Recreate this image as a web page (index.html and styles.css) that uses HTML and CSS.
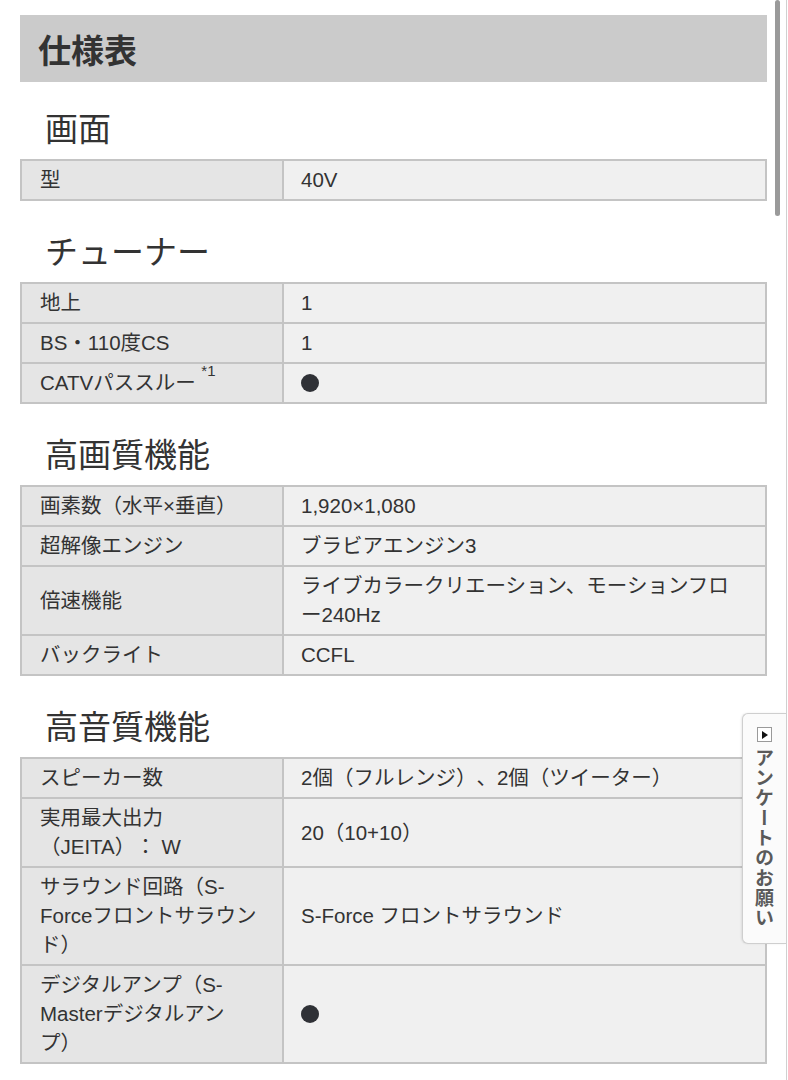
FILE: index.html
```html
<!DOCTYPE html>
<html lang="ja">
<head>
<meta charset="utf-8">
<title>仕様表</title>
<link rel="stylesheet" href="styles.css">
</head>
<body>
<main class="page">
  <h1 class="spec-header">仕様表</h1>

  <h2 class="section-title first">画面</h2>
  <table class="spec">
    <colgroup><col class="c1"><col></colgroup>
    <tr><th>型</th><td>40V</td></tr>
  </table>

  <h2 class="section-title">チューナー</h2>
  <table class="spec">
    <colgroup><col class="c1"><col></colgroup>
    <tr><th>地上</th><td>1</td></tr>
    <tr><th>BS・110度CS</th><td>1</td></tr>
    <tr><th>CATVパススルー <sup class="note">*1</sup></th><td><span class="dot"></span></td></tr>
  </table>

  <h2 class="section-title">高画質機能</h2>
  <table class="spec">
    <colgroup><col class="c1"><col></colgroup>
    <tr><th>画素数（水平×垂直）</th><td>1,920×1,080</td></tr>
    <tr><th>超解像エンジン</th><td>ブラビアエンジン3</td></tr>
    <tr><th>倍速機能</th><td>ライブカラークリエーション、モーションフロー240Hz</td></tr>
    <tr><th>バックライト</th><td>CCFL</td></tr>
  </table>

  <h2 class="section-title">高音質機能</h2>
  <table class="spec">
    <colgroup><col class="c1"><col></colgroup>
    <tr><th>スピーカー数</th><td>2個（フルレンジ）、2個（ツイーター）</td></tr>
    <tr><th>実用最大出力（JEITA）： W</th><td>20（10+10）</td></tr>
    <tr><th>サラウンド回路（S-Forceフロントサラウンド）</th><td>S-Force フロントサラウンド</td></tr>
    <tr><th>デジタルアンプ（S-Masterデジタルアンプ）</th><td><span class="dot"></span></td></tr>
  </table>
</main>

<div class="scroll-thumb"></div>
<div class="edge-line"></div>

<a class="survey-tab" href="#">
  <span class="survey-icon"><span class="tri"></span></span>
  <span class="survey-text">アンケートのお願い</span>
</a>
</body>
</html>
```

FILE: styles.css
```css
html, body {
  margin: 0;
  padding: 0;
  background: #ffffff;
}

body {
  font-family: "Liberation Sans", "Noto Sans CJK JP", sans-serif;
  color: #333333;
  position: relative;
  min-height: 1080px;
  text-spacing-trim: space-all;
}

.page {
  width: 747px;
  margin: 0 0 0 20px;
  padding-top: 15px;
}

.spec-header {
  margin: 0;
  height: 67px;
  background: #cbcbcb;
  display: flex;
  align-items: center;
  padding-left: 18px;
  font-size: 33px;
  font-weight: bold;
  color: #333;
}

.section-title {
  margin: 28px 0 5px;
  padding-left: 25px;
  font-size: 33px;
  line-height: 48px;
  font-weight: normal;
  color: #333;
}

.section-title.first {
  margin-top: 24px;
  margin-bottom: 5px;
}

.spec {
  width: 747px;
  border-collapse: collapse;
  table-layout: fixed;
  font-size: 20.5px;
  line-height: 29px;
}

.spec col.c1 {
  width: 262px;
}

.spec th,
.spec td {
  border: 2px solid #c4c4c4;
  padding: 4px 10px 5px 17px;
  text-align: left;
  vertical-align: middle;
  font-weight: normal;
  color: #333;
}

.spec th {
  background: #e5e5e5;
  padding-left: 18px;
  padding-right: 22px;
}

.spec td {
  background: #f0f0f0;
  padding-right: 20px;
}

.note {
  font-size: 15px;
  vertical-align: top;
  position: relative;
  top: -5px;
  line-height: 1;
}

.dot {
  display: inline-block;
  width: 18px;
  height: 18px;
  border-radius: 50%;
  background: #2f3136;
  vertical-align: -2px;
}

.scroll-thumb {
  position: absolute;
  left: 775px;
  top: 0;
  width: 5px;
  height: 216px;
  border-radius: 3px;
  background: #9a9a9a;
}

.edge-line {
  position: absolute;
  left: 786px;
  top: 0;
  width: 1px;
  height: 1080px;
  background: #d0d0d0;
}

.survey-tab {
  position: absolute;
  left: 742px;
  top: 713px;
  width: 44px;
  height: 231px;
  box-sizing: border-box;
  border: 1px solid #cfcfcf;
  border-right: none;
  border-radius: 6px 0 0 6px;
  background: #fbfbfb;
  display: flex;
  flex-direction: column;
  align-items: center;
  padding-top: 13px;
  text-decoration: none;
  box-shadow: -1px 0 2px rgba(0, 0, 0, 0.08);
}

.survey-icon {
  width: 15px;
  height: 15px;
  box-sizing: border-box;
  border: 1px solid #9a9a9a;
  background: #fff;
  display: flex;
  align-items: center;
  justify-content: center;
}

.tri {
  width: 0;
  height: 0;
  border-top: 4px solid transparent;
  border-bottom: 4px solid transparent;
  border-left: 6px solid #111;
  margin-left: 1px;
}

.survey-text {
  margin-top: 6px;
  writing-mode: vertical-rl;
  font-family: "Noto Sans CJK JP", sans-serif;
  font-size: 19px;
  font-weight: bold;
  line-height: 1;
  letter-spacing: 1px;
  color: #5a5a5a;
}
```
